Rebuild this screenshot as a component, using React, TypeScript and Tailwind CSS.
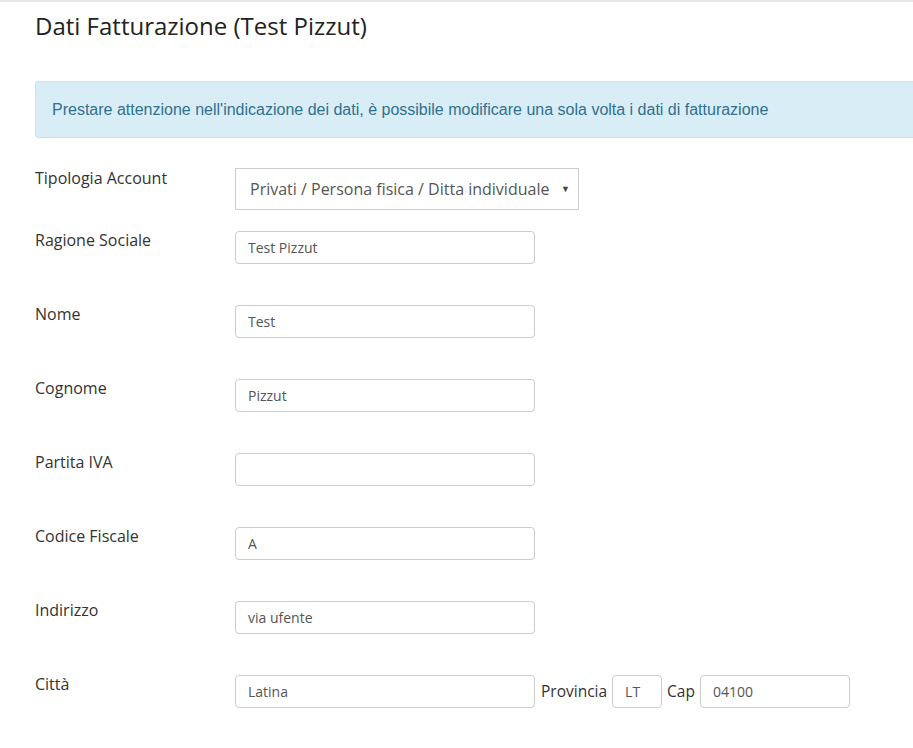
import React from "react";

const OS = { fontFamily: '"Open Sans", sans-serif' };

function Field({ label, value }: { label: string; value: string }) {
  return (
    <div className="flex items-start h-[74px]">
      <div className="w-[200px] text-[16px] leading-[18px] text-[#333]">{label}</div>
      <div className="w-[300px] h-[33px] border border-[#ccc] rounded-[4px] px-[12px] flex items-center text-[14px] text-[#555] bg-white">
        {value}
      </div>
    </div>
  );
}

export default function App() {
  return (
    <div className="w-[913px] h-[748px] bg-white overflow-hidden" style={OS}>
      <div className="h-[2px] bg-[#e5e5e5] w-full" />
      <div className="pl-[35px]">
        <h1 className="text-[24px] leading-[30px] text-[#222] mt-[9px]">Dati Fatturazione (Test Pizzut)</h1>
        <div
          className="mt-[40px] h-[57px] bg-[#d9edf7] border border-[#bce8f1] rounded-l-[4px] border-r-0 pl-[16px] flex items-center text-[16px] text-[#31708f]"
          style={{ fontFamily: '"Liberation Sans", Arial, sans-serif' }}
        >
          <span className="mt-[1px]">Prestare attenzione nell'indicazione dei dati, è possibile modificare una sola volta i dati di fatturazione</span>
        </div>
        <div className="mt-[30px] flex items-start h-[63px]">
          <div className="w-[200px] text-[16px] leading-[20px] text-[#333]">Tipologia Account</div>
          <div className="w-[344px] h-[42px] border border-[#ccc] flex items-center pl-[14px] pr-[8px] text-[16px] text-[#555] bg-white">
            <span className="flex-1">Privati / Persona fisica / Ditta individuale</span>
            <span className="text-[9px] text-[#444]">▼</span>
          </div>
        </div>
        <Field label="Ragione Sociale" value="Test Pizzut" />
        <Field label="Nome" value="Test" />
        <Field label="Cognome" value="Pizzut" />
        <Field label="Partita IVA" value="" />
        <Field label="Codice Fiscale" value="A" />
        <Field label="Indirizzo" value="via ufente" />
        <div className="flex items-start h-[74px]">
          <div className="w-[200px] text-[16px] leading-[18px] text-[#333]">Città</div>
          <div className="w-[300px] h-[33px] border border-[#ccc] rounded-[4px] px-[12px] flex items-center text-[14px] text-[#555] bg-white">
            Latina
          </div>
          <div className="h-[33px] flex items-center pl-[6px] pr-[5px] text-[15.5px] text-[#333]">Provincia</div>
          <div className="w-[50px] h-[33px] border border-[#ccc] rounded-[4px] px-[12px] flex items-center text-[14px] text-[#555] bg-white">
            LT
          </div>
          <div className="h-[33px] flex items-center px-[5px] text-[15.5px] text-[#333]">Cap</div>
          <div className="w-[150px] h-[33px] border border-[#ccc] rounded-[4px] px-[12px] flex items-center text-[14px] text-[#555] bg-white">
            04100
          </div>
        </div>
      </div>
    </div>
  );
}
